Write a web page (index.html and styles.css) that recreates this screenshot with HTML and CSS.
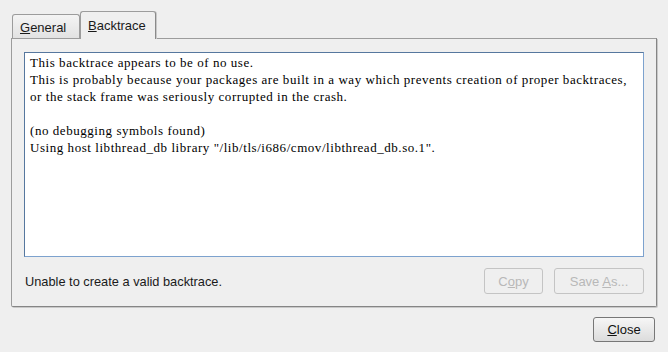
FILE: index.html
```html
<!DOCTYPE html>
<html>
<head>
  <title>Crash Report</title>
  <link rel="stylesheet" href="styles.css">
</head>
<body>
  <div class="dialog">
    <div class="tabs">
      <div class="tab"><u>G</u>eneral</div>
      <div class="tab active"><u>B</u>acktrace</div>
    </div>
    <div class="panel">
      <div class="trace">This backtrace appears to be of no use.
This is probably because your packages are built in a way which prevents creation of proper backtraces,
or the stack frame was seriously corrupted in the crash.

(no debugging symbols found)
Using host libthread_db library "/lib/tls/i686/cmov/libthread_db.so.1".</div>
      <div class="panel-footer">
        <span class="status">Unable to create a valid backtrace.</span>
        <button class="btn copy" disabled>C<u>o</u>py</button>
        <button class="btn save" disabled>Save <u>A</u>s...</button>
      </div>
    </div>
    <div class="actions">
      <button class="btn close"><u>C</u>lose</button>
    </div>
  </div>
</body>
</html>
```
FILE: styles.css
```css
body {
  margin: 0;
  background: #efefef;
  font-family: 'Liberation Sans', Arial, sans-serif;
  font-size: 12px;
  color: #1a1a1a;
}
.dialog {
  width: 646px;
  padding: 11px 11px 0 11px;
}
.tabs {
  display: flex;
  align-items: flex-end;
  height: 27px;
  padding-left: 1px;
  position: relative;
  z-index: 1;
}
.tab {
  box-sizing: border-box;
  height: 24px;
  width: 68px;
  padding: 5px 0 0 7px;
  font-size: 13px;
  background: linear-gradient(#f4f4f4, #e2e2e2);
  border: 1px solid #9c9c9c;
  border-bottom: none;
  border-radius: 3px 3px 0 0;
}
.tab.active {
  height: 28px;
  width: 76px;
  margin-bottom: -1px;
  background: #efefef;
  border-right-color: #8a8a8a;
  box-shadow: 1px 0 0 #c8c8c8;
  padding-top: 6px;
}
.panel {
  box-sizing: border-box;
  height: 269px;
  border: 1px solid #9c9c9c;
  border-right-color: #858585;
  border-bottom-color: #858585;
  border-radius: 0 0 2px 2px;
  box-shadow: 1px 1px 0 #c9c9c9;
  padding: 13px 12px 12px 12px;
  display: flex;
  flex-direction: column;
}
.trace {
  box-sizing: border-box;
  height: 205px;
  width: 620px;
  background: #fff;
  border: 1px solid #7da2ce;
  border-top-color: #56779e;
  border-left-color: #56779e;
  padding: 1px 5px;
  white-space: pre;
  font-family: 'Liberation Serif', 'Times New Roman', serif;
  font-size: 13px;
  letter-spacing: 0.55px;
  line-height: 17px;
  color: #000;
  overflow: hidden;
}
.panel-footer {
  display: flex;
  align-items: center;
  margin-top: 11px;
  height: 26px;
}
.status {
  flex: 1;
  padding-left: 1px;
  padding-top: 1px;
  font-size: 12.8px;
}
.btn {
  box-sizing: border-box;
  height: 26px;
  border: 1px solid #8e8e8e;
  border-radius: 3px;
  background: linear-gradient(#f6f6f6, #dcdcdc);
  font-family: 'Liberation Sans', Arial, sans-serif;
  font-size: 13px;
  color: #111;
  padding: 0;
}
.btn[disabled] {
  background: #efefef;
  border-color: #c4c4c4;
  color: #b8b8b8;
}
.copy {
  width: 59px;
  margin-right: 11px;
}
.save {
  width: 90px;
}
.actions {
  display: flex;
  justify-content: flex-end;
  margin-top: 10px;
  padding-right: 2px;
}
.close {
  width: 62px;
  height: 25px;
  border-color: #777;
}
```
